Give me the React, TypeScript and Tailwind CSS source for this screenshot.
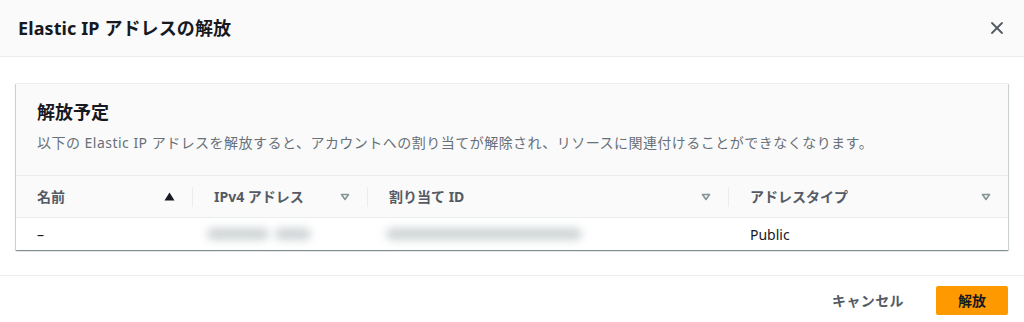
import { X } from 'lucide-react';

const font = { fontFamily: '"Noto Sans", "Noto Sans CJK JP", sans-serif' };

function SortDown() {
  return (
    <svg width="10" height="8" viewBox="0 0 10 8" className="shrink-0">
      <path d="M1.5 1.5h7L5 6.5z" fill="none" stroke="#879596" strokeWidth="1.6" strokeLinejoin="round" />
    </svg>
  );
}

function SortUp() {
  return (
    <svg width="11" height="9" viewBox="0 0 11 9" className="shrink-0">
      <path d="M5.5 0.5L10.5 8.5H0.5z" fill="#16191f" />
    </svg>
  );
}

function HeadCell({ label, sorted, width, last }: { label: string; sorted?: boolean; width: string; last?: boolean }) {
  return (
    <div className={`${width} flex items-center h-full`}>
      <div className="flex-1 flex items-center justify-between pl-[21px] pr-[17px]">
        <span className="font-bold text-[14px] text-[#545b64]">{label}</span>
        {sorted ? <SortUp /> : <SortDown />}
      </div>
      {!last && <div className="w-px h-[20px] bg-[#eaeded]" />}
    </div>
  );
}

export default function App() {
  return (
    <div style={font} className="w-[1024px] h-[322px] bg-white text-[#16191f] overflow-hidden">
      <div className="h-[57px] bg-[#fafafa] border-b border-[#eaeded] flex items-center justify-between pl-[18px] pr-[17px]">
        <h2 className="text-[18px] font-bold leading-[22px] tracking-[0.1px]">Elastic IP アドレスの解放</h2>
        <X size={20} strokeWidth={2.2} className="text-[#545b64]" />
      </div>

      <div className="px-[16px] pt-[26px] pb-[25px]">
        <div className="bg-white border-t border-[#eaeded] shadow-[0_1px_1px_0_rgba(0,28,36,0.3),1px_1px_1px_0_rgba(0,28,36,0.15),-1px_1px_1px_0_rgba(0,28,36,0.15)]">
          <div className="bg-[#fafafa] pl-[21px] pt-[16px] pb-[21px] border-b border-[#eaeded]">
            <h3 className="text-[18px] font-bold leading-[24px]">解放予定</h3>
            <p className="text-[14px] text-[#687078] leading-[22px] mt-[8px] tracking-[0.48px]">
              以下の Elastic IP アドレスを解放すると、アカウントへの割り当てが解除され、リソースに関連付けることができなくなります。
            </p>
          </div>
          <div className="h-[42px] bg-[#fafafa] flex items-center border-b border-[#eaeded]">
            <HeadCell label="名前" sorted width="w-[177px]" />
            <HeadCell label="IPv4 アドレス" width="w-[175px]" />
            <HeadCell label="割り当て ID" width="w-[361px]" />
            <HeadCell label="アドレスタイプ" width="flex-1" last />
          </div>
          <div className="h-[32px] flex items-center text-[14px]">
            <div className="w-[177px] pl-[21px]">–</div>
            <div className="w-[175px] pl-[14px] flex gap-[6px]">
              <div className="w-[62px] h-[12px] rounded-full bg-[#cfd4d6] blur-[4px]" />
              <div className="w-[36px] h-[12px] rounded-full bg-[#cfd4d6] blur-[4px]" />
            </div>
            <div className="w-[361px] pl-[18px]">
              <div className="w-[196px] h-[12px] rounded-full bg-[#cfd4d6] blur-[4px]" />
            </div>
            <div className="flex-1 pl-[21px]">Public</div>
          </div>
        </div>
      </div>

      <div className="border-t border-[#eaeded] flex items-center justify-end gap-[32px] pr-[16px] pt-[10px]">
        <span className="font-bold text-[14px] text-[#545b64] tracking-[0.4px]">キャンセル</span>
        <button className="w-[72px] h-[29px] rounded-[2px] bg-[#ff9900] font-bold text-[14px] text-[#16191f]">解放</button>
      </div>
    </div>
  );
}
